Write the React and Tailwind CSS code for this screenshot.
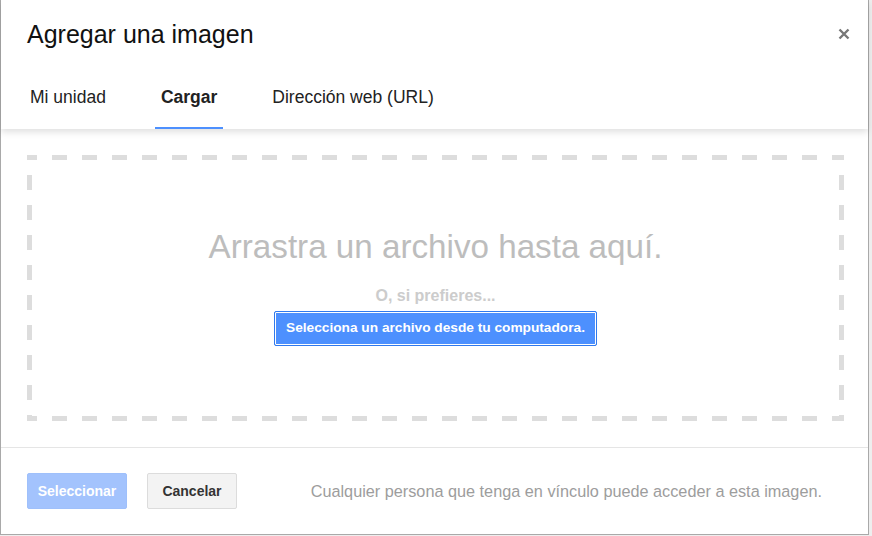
import React from "react";

export default function App() {
  const font = { fontFamily: '"Liberation Sans", Arial, sans-serif' };
  return (
    <div className="w-[872px] h-[536px] bg-[#eeeeee] flex items-start" style={font}>
      <div className="w-[869px] h-[535px] bg-white border-l border-r border-b border-[#a9a9a9] flex flex-col">
        {/* Header */}
        <div className="relative z-10 bg-white shadow-[0_3px_7px_rgba(0,0,0,0.13)]">
          <div className="flex items-start pt-[19px] pl-[26px] pr-[17px]">
            <div className="text-[25px] leading-[30px] text-[#111]">Agregar una imagen</div>
            <button className="ml-auto mt-[8px] w-[14px] h-[14px] flex items-center justify-center">
              <svg width="12" height="12" viewBox="0 0 12 12">
                <path d="M1.5 1.5 L10.5 10.5 M10.5 1.5 L1.5 10.5" stroke="#777" strokeWidth="2.4" />
              </svg>
            </button>
          </div>
          <div className="flex gap-[43px] pl-[23px] mt-[38px]">
            <div className="px-[6px] pb-[20px] border-b-2 border-transparent text-[17.5px] leading-[20px] text-[#222]">Mi unidad</div>
            <div className="px-[6px] pb-[20px] border-b-2 border-[#4d90fe] text-[17.5px] leading-[20px] font-bold text-[#222]">Cargar</div>
            <div className="px-[6px] pb-[20px] border-b-2 border-transparent text-[17.5px] leading-[20px] text-[#222]">Dirección web (URL)</div>
          </div>
        </div>

        {/* Body */}
        <div className="pt-[26px] pl-[26px] pr-[24px] pb-[26px]">
          <div className="h-[266px] flex flex-col items-center pt-[72px] [background-image:linear-gradient(to_right,#dddddd_15px,transparent_15px),linear-gradient(to_right,#dddddd_15px,transparent_15px),linear-gradient(to_bottom,#dddddd_15px,transparent_15px),linear-gradient(to_bottom,#dddddd_15px,transparent_15px)] [background-size:30px_5px,30px_5px,5px_30px,5px_30px] [background-position:-5px_0,-5px_100%,0_-10px,100%_-10px] [background-repeat:repeat-x,repeat-x,repeat-y,repeat-y]">
            <div className="text-[33.2px] leading-[40px] text-[#bdbdbd]">Arrastra un archivo hasta aquí.</div>
            <div className="mt-[19px] text-[16px] leading-[20px] font-bold text-[#cccccc]">O, si prefieres...</div>
            <button className="mt-[5px] h-[35px] px-[11px] rounded-[2px] border border-[#3079ed] bg-[#4d90fe] shadow-[inset_0_0_0_1px_#ffffff] text-[13.7px] font-bold text-white">
              Selecciona un archivo desde tu computadora.
            </button>
          </div>
        </div>

        {/* Footer */}
        <div className="border-t border-[#e5e5e5] flex items-center pt-[25px] pl-[26px] pr-[46px]">
          <button className="w-[100px] h-[36px] rounded-[2px] bg-[#a3c3fd] border border-[#9fc0fb] text-[14px] font-bold text-white">Seleccionar</button>
          <button className="ml-[20px] w-[90px] h-[36px] rounded-[2px] bg-[#f3f3f3] border border-[#dcdcdc] text-[14px] font-bold text-[#333]">Cancelar</button>
          <div className="ml-auto text-[16.25px] text-[#9d9d9d]">Cualquier persona que tenga en vínculo puede acceder a esta imagen.</div>
        </div>
      </div>
    </div>
  );
}
